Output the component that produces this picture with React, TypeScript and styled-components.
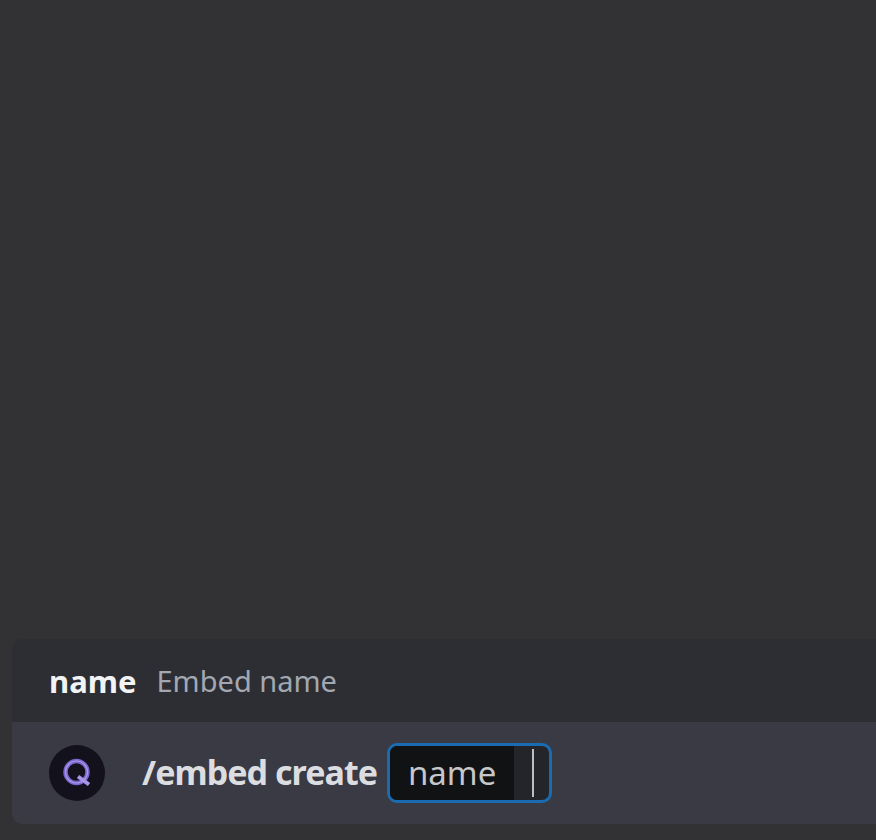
import React from "react";
import styled, { createGlobalStyle } from "styled-components";

const Global = createGlobalStyle`
  html, body { margin: 0; padding: 0; background: #323234; }
  body { font-family: "Noto Sans", "Open Sans", sans-serif; overflow: hidden; }
`;

const Page = styled.div`
  height: 840px;
  display: flex;
  flex-direction: column;
  justify-content: flex-end;
  padding: 0 0 16px 12px;
  box-sizing: border-box;
  overflow: hidden;
`;

const Panel = styled.div`
  width: 864px;
  border-radius: 10px 0 0 10px;
  overflow: hidden;
  display: flex;
  flex-direction: column;
`;

const Header = styled.div`
  height: 83px;
  background: #2d2e33;
  display: flex;
  align-items: center;
  padding-left: 37px;
  gap: 20px;
`;

const OptionName = styled.span`
  font-size: 31px;
  font-weight: 700;
  color: #f2f3f5;
`;

const OptionDesc = styled.span`
  font-size: 29px;
  color: #a2a8b2;
`;

const CommandRow = styled.div`
  height: 102px;
  background: #393a43;
  display: flex;
  align-items: center;
  padding-left: 37px;
`;

const Avatar = styled.div`
  width: 56px;
  height: 56px;
  border-radius: 50%;
  background: #13111c;
  display: flex;
  align-items: center;
  justify-content: center;
  margin-right: 37px;
  flex: none;
`;

const Command = styled.span`
  font-size: 34px;
  font-weight: 700;
  color: #dcdde0;
  letter-spacing: -0.95px;
  margin-right: 10px;
  padding-bottom: 3px;
`;

const Field = styled.div`
  width: 165px;
  height: 60px;
  box-sizing: border-box;
  border: 3px solid #1a6bb0;
  border-radius: 10px;
  background: #24252b;
  display: flex;
  align-items: stretch;
  overflow: hidden;
`;

const FieldLabel = styled.div`
  width: 124px;
  background: #111214;
  color: #c6c7ca;
  font-size: 33px;
  padding-bottom: 2px;
  box-sizing: border-box;
  display: flex;
  align-items: center;
  justify-content: center;
`;

const Caret = styled.div`
  width: 2px;
  margin: 3px 0 3px 18px;
  background: #bdbec2;
`;

export default function App() {
  return (
    <>
      <Global />
      <Page>
        <Panel>
          <Header>
            <OptionName>name</OptionName>
            <OptionDesc>Embed name</OptionDesc>
          </Header>
          <CommandRow>
            <Avatar>
              <svg width="34" height="34" viewBox="0 0 34 34" fill="none">
                <circle cx="16.5" cy="16" r="11" stroke="#7a66cc" strokeWidth="4.5" />
                <circle cx="16.5" cy="16" r="11" stroke="#a99ae8" strokeWidth="1.2" />
                <path d="M18 20.5l11 8" stroke="#a795e6" strokeWidth="4" />
              </svg>
            </Avatar>
            <Command>/embed create</Command>
            <Field>
              <FieldLabel>name</FieldLabel>
              <Caret />
            </Field>
          </CommandRow>
        </Panel>
      </Page>
    </>
  );
}
